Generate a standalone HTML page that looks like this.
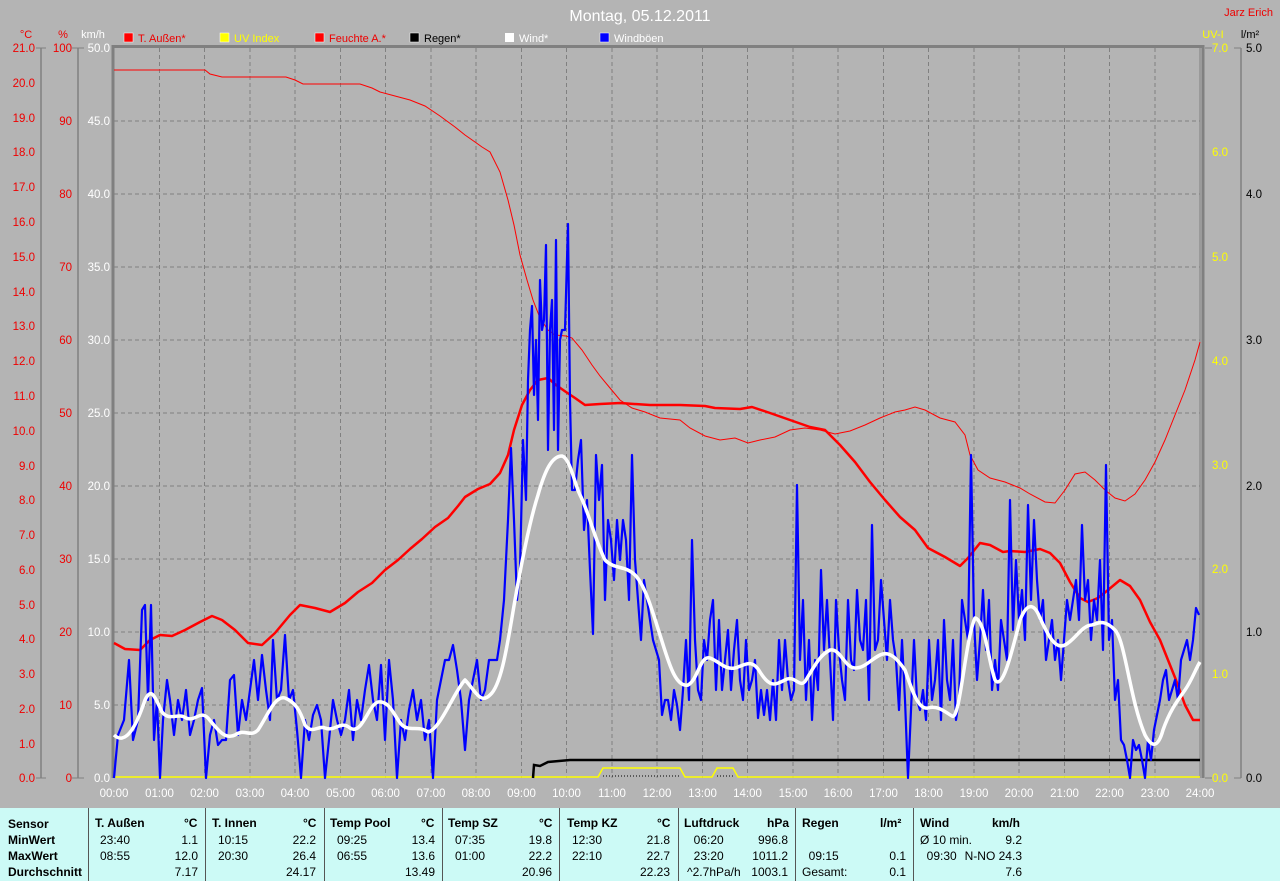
<!DOCTYPE html>
<html><head><meta charset="utf-8"><style>
body{margin:0;width:1280px;height:881px;background:#b4b4b4;overflow:hidden;font-family:"Liberation Sans",sans-serif}
svg{position:absolute;left:0;top:0}
.tbl{position:absolute;left:0;top:808px;width:1280px;height:73px;background:#ccfaf6;font-size:12px;color:#000}
.tbl div{position:absolute;white-space:nowrap}
.sep{width:1px;height:73px;top:0;background:#555}
</style></head><body>
<svg width="1280" height="808" font-family="Liberation Sans, sans-serif">
<text x="640" y="21" fill="#fff" font-size="16" text-anchor="middle">Montag, 05.12.2011</text>
<text x="1273" y="16" fill="#e00" font-size="11" text-anchor="end">Jarz Erich</text>
<g font-size="11">
<rect x="124" y="33" width="9" height="9" fill="#f00" stroke="#fff" stroke-width="0.5"/><text x="138" y="42" fill="#e00">T. Außen*</text>
<rect x="220" y="33" width="9" height="9" fill="#ff0" stroke="#fff" stroke-width="0.5"/><text x="234" y="42" fill="#ff0">UV Index</text>
<rect x="315" y="33" width="9" height="9" fill="#f00" stroke="#fff" stroke-width="0.5"/><text x="329" y="42" fill="#e00">Feuchte A.*</text>
<rect x="410" y="33" width="9" height="9" fill="#000" stroke="#fff" stroke-width="0.5"/><text x="424" y="42" fill="#000">Regen*</text>
<rect x="505" y="33" width="9" height="9" fill="#fff"/><text x="519" y="42" fill="#fff">Wind*</text>
<rect x="600" y="33" width="9" height="9" fill="#00f" stroke="#fff" stroke-width="0.5"/><text x="614" y="42" fill="#fff">Windböen</text>
<text x="26" y="38" fill="#e00" text-anchor="middle">°C</text>
<text x="63" y="38" fill="#e00" text-anchor="middle">%</text>
<text x="93" y="38" fill="#fff" text-anchor="middle">km/h</text>
<text x="1213" y="38" fill="#ff0" text-anchor="middle">UV-I</text>
<text x="1250" y="38" fill="#000" text-anchor="middle">l/m²</text>
</g>
<!-- grid -->
<g stroke="#808080" stroke-dasharray="4,3" stroke-width="1">
<path d="M114 121H1200M114 194H1200M114 267H1200M114 340H1200M114 413H1200M114 486H1200M114 559H1200M114 632H1200M114 705H1200"/>
<path d="M159.5 48V778M204.5 48V778M250 48V778M295 48V778M340.5 48V778M385.5 48V778M431 48V778M476 48V778M521.5 48V778M566.5 48V778M612 48V778M657 48V778M702.5 48V778M747.5 48V778M793 48V778M838 48V778M883.5 48V778M928.5 48V778M974 48V778M1019 48V778M1064.5 48V778M1109.5 48V778M1155 48V778"/>
</g>
<path d="M113 778V46.5H1203V778" fill="none" stroke="#808080" stroke-width="3"/>
<path d="M1200 48V778" stroke="#808080"/>
<!-- axes lines -->
<g stroke="#808080" stroke-width="1.5" fill="none">
<path d="M41 48V778M78 48V778M1241 48V778"/>
</g>
<g font-size="11" text-anchor="end" fill="#e00" id="c"></g>
<g font-size="11.5" fill="#e00" text-anchor="end">
<text x="35" y="52">21.0</text><text x="35" y="87">20.0</text><text x="35" y="122">19.0</text><text x="35" y="156">18.0</text><text x="35" y="191">17.0</text><text x="35" y="226">16.0</text><text x="35" y="261">15.0</text><text x="35" y="296">14.0</text><text x="35" y="330">13.0</text><text x="35" y="365">12.0</text><text x="35" y="400">11.0</text><text x="35" y="435">10.0</text><text x="35" y="470">9.0</text><text x="35" y="504">8.0</text><text x="35" y="539">7.0</text><text x="35" y="574">6.0</text><text x="35" y="609">5.0</text><text x="35" y="643">4.0</text><text x="35" y="678">3.0</text><text x="35" y="713">2.0</text><text x="35" y="748">1.0</text><text x="35" y="782">0.0</text>
<text x="72" y="52">100</text><text x="72" y="125">90</text><text x="72" y="198">80</text><text x="72" y="271">70</text><text x="72" y="344">60</text><text x="72" y="417">50</text><text x="72" y="490">40</text><text x="72" y="563">30</text><text x="72" y="636">20</text><text x="72" y="709">10</text><text x="72" y="782">0</text>
</g>
<g font-size="11.5" fill="#fff" text-anchor="end">
<text x="110" y="52">50.0</text><text x="110" y="125">45.0</text><text x="110" y="198">40.0</text><text x="110" y="271">35.0</text><text x="110" y="344">30.0</text><text x="110" y="417">25.0</text><text x="110" y="490">20.0</text><text x="110" y="563">15.0</text><text x="110" y="636">10.0</text><text x="110" y="709">5.0</text><text x="110" y="782">0.0</text>
</g>
<g stroke="#808080"><path d="M36 48H46M36 778H46M72 48H84M72 778H84M1205 48H1212M1205 778H1212M1234 48H1241M1234 778H1241"/></g>
<g font-size="11.5" fill="#ff0">
<text x="1212" y="52">7.0</text><text x="1212" y="156">6.0</text><text x="1212" y="261">5.0</text><text x="1212" y="365">4.0</text><text x="1212" y="469">3.0</text><text x="1212" y="573">2.0</text><text x="1212" y="678">1.0</text><text x="1212" y="782">0.0</text>
</g>
<g font-size="11.5" fill="#000">
<text x="1246" y="52">5.0</text><text x="1246" y="198">4.0</text><text x="1246" y="344">3.0</text><text x="1246" y="490">2.0</text><text x="1246" y="636">1.0</text><text x="1246" y="782">0.0</text>
</g>
<g font-size="11.5" fill="#fff" text-anchor="middle">
<text x="114" y="797">00:00</text><text x="159.5" y="797">01:00</text><text x="204.5" y="797">02:00</text><text x="250" y="797">03:00</text><text x="295" y="797">04:00</text><text x="340.5" y="797">05:00</text><text x="385.5" y="797">06:00</text><text x="431" y="797">07:00</text><text x="476" y="797">08:00</text><text x="521.5" y="797">09:00</text><text x="566.5" y="797">10:00</text><text x="612" y="797">11:00</text><text x="657" y="797">12:00</text><text x="702.5" y="797">13:00</text><text x="747.5" y="797">14:00</text><text x="793" y="797">15:00</text><text x="838" y="797">16:00</text><text x="883.5" y="797">17:00</text><text x="928.5" y="797">18:00</text><text x="974" y="797">19:00</text><text x="1019" y="797">20:00</text><text x="1064.5" y="797">21:00</text><text x="1109.5" y="797">22:00</text><text x="1155" y="797">23:00</text><text x="1200" y="797">24:00</text>
</g>
<!-- UV yellow -->
<path d="M114 777H598L603 768H680L685 777H712L717 768H733L738 777H1200" fill="none" stroke="#ff0" stroke-width="1.5"/>
<path d="M603 776H680M717 776H733" stroke="#000" stroke-dasharray="1,2"/>
<!-- rain -->
<path d="M533 778L534 765L540 766L548 762L570 760H1200" fill="none" stroke="#000" stroke-width="2.5"/>
<!-- thin red -->
<path d="M114 70H205L210 74L222 77H286L295 80L303 84H360L372 88L380 92L395 96L410 100L425 106L440 116L455 127L465 135L475 142L482 147L490 152L500 172L508 200L514 225L520 255L527 280L533 300L540 318L548 330L555 335L566 336L572 338L582 350L592 365L600 376L610 388L620 400L632 408L645 412L660 418L680 420L690 428L705 436L720 440L735 438L748 443L760 440L775 437L790 430L805 428L820 430L835 434L850 431L865 425L880 418L895 412L905 410L915 407L925 410L940 418L955 422L965 435L970 455L978 470L990 478L1005 482L1020 488L1030 494L1045 502L1055 503L1065 490L1075 474L1085 472L1095 480L1105 490L1115 498L1125 501L1135 494L1145 480L1155 462L1165 440L1175 415L1185 390L1195 360L1200 342" fill="none" stroke="#f00" stroke-width="1"/>
<!-- thick red -->
<path d="M114 643L125 649L140 650L150 640L160 635L172 636L185 630L200 622L212 616L222 620L235 630L248 643L262 645L275 633L290 615L300 605L315 608L330 612L345 603L358 592L372 583L385 570L398 560L410 549L422 539L435 527L448 518L458 506L465 497L478 489L490 484L500 473L508 455L514 430L522 405L530 390L538 380L548 378L556 385L566 392L575 398L585 405L600 404L620 403L650 405L680 405L705 406L715 408L740 409L752 407L770 413L790 420L810 427L825 430L840 445L855 462L870 482L885 500L900 517L915 530L928 548L945 557L960 566L968 558L980 543L990 545L1003 552L1010 551L1025 552L1040 549L1050 553L1060 563L1070 582L1080 598L1088 602L1098 598L1108 590L1120 580L1130 586L1140 600L1150 622L1160 640L1168 660L1176 680L1185 705L1193 720L1200 720" fill="none" stroke="#f00" stroke-width="2.5" stroke-linejoin="round"/>
<!-- blue -->
<polyline fill="none" stroke="#00f" stroke-width="2.2" stroke-linejoin="round" points="114,778 118,735 124,720 129,660 133,740 138,720 142,610 145,605 148,700 151,605 154,740 157,700 160,778 163,720 167,680 170,700 174,735 178,700 182,720 186,690 190,735 194,720 198,700 202,688 206,778 210,735 214,720 218,745 222,740 226,740 230,680 234,675 238,735 242,700 246,720 250,690 254,660 258,700 262,655 266,690 270,720 273,640 277,700 281,690 285,635 289,700 293,690 297,730 301,778 305,720 309,740 313,715 317,705 321,720 325,778 329,740 333,700 337,720 341,735 345,720 349,690 353,740 357,700 361,720 365,690 369,665 373,700 377,720 381,665 385,740 389,660 393,700 397,778 401,720 405,740 409,710 413,690 417,720 421,700 425,740 429,720 433,778 437,700 441,680 445,660 449,660 453,645 457,670 461,700 465,750 469,700 473,680 477,660 481,700 485,690 489,660 493,660 497,660 500,640 504,600 508,520 511,448 514,520 517,600 520,570 523,440 526,500 528,380 530,330 532,306 534,395 536,340 538,420 540,280 542,330 544,320 546,245 548,450 550,330 552,300 554,430 556,240 558,450 560,340 562,330 565,330 568,224 570,400 572,490 575,490 578,460 581,440 584,530 587,500 590,570 593,634 596,455 599,500 602,465 605,600 608,520 611,540 614,580 617,520 620,560 623,520 626,540 629,600 632,455 635,560 638,600 641,640 644,580 647,600 650,620 653,640 656,650 659,660 662,715 665,700 668,700 671,720 674,690 677,705 680,730 683,690 686,640 689,700 692,540 695,640 698,690 701,700 704,640 707,660 710,620 713,600 716,690 719,620 722,690 725,660 728,630 731,690 734,650 737,620 740,680 743,700 746,640 749,690 752,680 755,660 758,718 761,690 764,715 767,690 770,720 773,680 776,720 779,640 782,690 785,640 788,680 791,700 794,690 797,485 800,660 803,600 806,700 809,640 812,720 815,660 818,690 821,570 824,650 827,600 830,660 833,720 836,600 839,650 842,680 845,700 848,600 851,660 854,670 857,590 860,640 863,650 866,600 869,700 872,525 875,650 878,640 881,580 884,620 887,660 890,600 893,640 896,660 899,710 902,640 905,700 908,778 911,710 914,640 917,700 920,710 923,690 926,720 929,640 932,700 935,680 938,640 941,720 944,620 947,680 950,700 953,640 956,720 959,700 962,600 965,620 968,640 971,455 974,620 977,680 980,640 983,590 986,650 989,600 992,690 995,660 998,690 1001,620 1004,640 1007,660 1010,500 1013,630 1016,560 1019,620 1022,590 1025,640 1028,505 1031,600 1034,520 1037,580 1040,620 1043,600 1046,660 1049,640 1052,620 1055,660 1058,640 1061,680 1064,640 1067,600 1070,620 1073,600 1076,580 1079,620 1082,525 1085,600 1088,580 1091,640 1094,600 1097,620 1100,560 1103,650 1106,465 1109,640 1112,620 1115,700 1118,680 1121,740 1124,745 1127,760 1130,778 1133,740 1136,750 1139,745 1142,760 1145,778 1148,740 1151,760 1154,730 1157,715 1160,700 1163,680 1166,670 1169,700 1172,690 1175,680 1178,700 1181,660 1184,650 1187,640 1190,660 1193,640 1196,608 1199,615"/>
<!-- white smooth -->
<path d="M114 735C125 745 135 730 145 700C152 685 156 700 162 712C170 722 178 712 186 718C195 722 200 710 208 718C218 730 225 740 235 735C245 728 250 738 258 730C268 715 275 695 285 698C295 702 300 710 305 725C312 735 318 725 325 728C335 732 340 720 350 728C362 736 368 705 378 702C390 700 395 718 402 725C410 732 418 725 428 732C440 730 455 690 465 680C475 690 480 705 490 695C502 685 508 640 515 600C522 560 530 520 538 495C545 470 552 456 562 456C570 458 575 485 580 495C588 510 595 540 605 560C615 570 625 565 635 575C645 585 652 610 660 635C668 660 675 688 688 685C698 680 700 655 710 658C720 662 725 670 735 668C745 665 752 658 760 672C770 688 775 685 785 680C795 674 800 690 806 680C815 665 820 655 830 650C840 648 845 668 855 668C865 668 870 660 880 655C890 650 898 660 905 670C912 690 918 710 928 708C938 705 945 712 952 716C960 722 965 640 975 618C985 620 988 660 995 680C1002 690 1010 660 1020 620C1028 600 1035 605 1040 618C1048 635 1055 650 1065 645C1075 640 1082 625 1092 625C1100 622 1105 620 1115 630C1125 640 1130 700 1145 735C1152 748 1158 748 1163 730C1170 710 1178 700 1185 690C1192 680 1196 668 1200 662" fill="none" stroke="#fff" stroke-width="3.5" stroke-linejoin="round"/>
</svg>
<div class="tbl">
<div class="sep" style="left:88px"></div><div class="sep" style="left:205px"></div><div class="sep" style="left:324px"></div><div class="sep" style="left:442px"></div><div class="sep" style="left:559px"></div><div class="sep" style="left:678px"></div><div class="sep" style="left:795px"></div><div class="sep" style="left:913px"></div>
<div style="left:8px;top:8px;font-weight:bold;line-height:16px">Sensor<br>MinWert<br>MaxWert<br>Durchschnitt</div>
<div style="left:95px;top:8px;font-weight:bold">T. Außen</div><div style="left:184px;top:8px;font-weight:bold">°C</div>
<div style="left:100px;top:24px;line-height:16px">23:40<br>08:55</div><div style="left:150px;top:24px;width:48px;text-align:right;line-height:16px">1.1<br>12.0<br>7.17</div>
<div style="left:212px;top:8px;font-weight:bold">T. Innen</div><div style="left:303px;top:8px;font-weight:bold">°C</div>
<div style="left:218px;top:24px;line-height:16px">10:15<br>20:30</div><div style="left:268px;top:24px;width:48px;text-align:right;line-height:16px">22.2<br>26.4<br>24.17</div>
<div style="left:330px;top:8px;font-weight:bold">Temp Pool</div><div style="left:421px;top:8px;font-weight:bold">°C</div>
<div style="left:337px;top:24px;line-height:16px">09:25<br>06:55</div><div style="left:387px;top:24px;width:48px;text-align:right;line-height:16px">13.4<br>13.6<br>13.49</div>
<div style="left:448px;top:8px;font-weight:bold">Temp SZ</div><div style="left:539px;top:8px;font-weight:bold">°C</div>
<div style="left:455px;top:24px;line-height:16px">07:35<br>01:00</div><div style="left:504px;top:24px;width:48px;text-align:right;line-height:16px">19.8<br>22.2<br>20.96</div>
<div style="left:567px;top:8px;font-weight:bold">Temp KZ</div><div style="left:657px;top:8px;font-weight:bold">°C</div>
<div style="left:572px;top:24px;line-height:16px">12:30<br>22:10</div><div style="left:622px;top:24px;width:48px;text-align:right;line-height:16px">21.8<br>22.7<br>22.23</div>
<div style="left:684px;top:8px;font-weight:bold">Luftdruck</div><div style="left:767px;top:8px;font-weight:bold">hPa</div>
<div style="left:687px;top:24px;line-height:16px">&nbsp;&nbsp;06:20<br>&nbsp;&nbsp;23:20<br>^2.7hPa/h</div><div style="left:740px;top:24px;width:48px;text-align:right;line-height:16px">996.8<br>1011.2<br>1003.1</div>
<div style="left:802px;top:8px;font-weight:bold">Regen</div><div style="left:880px;top:8px;font-weight:bold">l/m²</div>
<div style="left:802px;top:24px;line-height:16px">&nbsp;<br>&nbsp;&nbsp;09:15<br>Gesamt:</div><div style="left:858px;top:24px;width:48px;text-align:right;line-height:16px">&nbsp;<br>0.1<br>0.1</div>
<div style="left:920px;top:8px;font-weight:bold">Wind</div><div style="left:992px;top:8px;font-weight:bold">km/h</div>
<div style="left:920px;top:24px;line-height:16px">Ø 10 min.<br>&nbsp;&nbsp;09:30</div><div style="left:962px;top:24px;width:60px;text-align:right;line-height:16px">9.2<br>N-NO 24.3<br>7.6</div>
</div>
</body></html>
